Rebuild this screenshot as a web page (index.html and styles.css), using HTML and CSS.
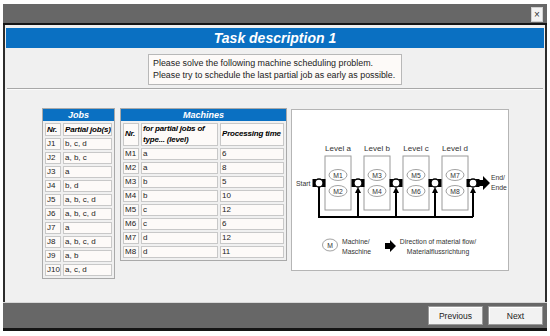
FILE: index.html
```html
<!DOCTYPE html>
<html lang="en">
<head>
    <meta charset="UTF-8">
    <title>Task description 1</title>
    <link rel="stylesheet" href="styles.css">
</head>
<body>
<div class="window">
    <div class="titlebar"><span class="close">&#215;</span></div>
    <div class="content">
        <div class="banner">Task description 1</div>
        <div class="note">Please solve the following machine scheduling problem.<br>Please try to schedule the last partial job as early as possible.</div>
        <div class="rule"></div>
        <div class="panels">
            <div class="grid jobs">
                <div class="grid-head">Jobs</div>
                <table>
                    <tr class="cols"><th class="nr">Nr.</th><th>Partial job(s)</th></tr>
                    <tr><td>J1</td><td>b, c, d</td></tr>
                    <tr><td>J2</td><td>a, b, c</td></tr>
                    <tr><td>J3</td><td>a</td></tr>
                    <tr><td>J4</td><td>b, d</td></tr>
                    <tr><td>J5</td><td>a, b, c, d</td></tr>
                    <tr><td>J6</td><td>a, b, c, d</td></tr>
                    <tr><td>J7</td><td>a</td></tr>
                    <tr><td>J8</td><td>a, b, c, d</td></tr>
                    <tr><td>J9</td><td>a, b</td></tr>
                    <tr><td>J10</td><td>a, c, d</td></tr>
                </table>
            </div>
            <div class="grid machines">
                <div class="grid-head">Machines</div>
                <table>
                    <tr class="cols tall"><th class="nr">Nr.</th><th class="type">for partial jobs of type... (level)</th><th class="time">Processing time</th></tr>
                    <tr><td>M1</td><td>a</td><td>6</td></tr>
                    <tr><td>M2</td><td>a</td><td>8</td></tr>
                    <tr><td>M3</td><td>b</td><td>5</td></tr>
                    <tr><td>M4</td><td>b</td><td>10</td></tr>
                    <tr><td>M5</td><td>c</td><td>12</td></tr>
                    <tr><td>M6</td><td>c</td><td>6</td></tr>
                    <tr><td>M7</td><td>d</td><td>12</td></tr>
                    <tr><td>M8</td><td>d</td><td>11</td></tr>
                </table>
            </div>
            <div class="diagram">
                <svg width="216" height="160" viewBox="0 0 216 160">
                    <!-- levels -->
                    <g class="level">
                        <rect x="33" y="46" width="26" height="54"/>
                        <rect x="72" y="46" width="26" height="54"/>
                        <rect x="111" y="46" width="26" height="54"/>
                        <rect x="150" y="46" width="26" height="54"/>
                    </g>
                    <g class="label" text-anchor="middle">
                        <text x="46" y="41">Level a</text>
                        <text x="85" y="41">Level b</text>
                        <text x="124" y="41">Level c</text>
                        <text x="163" y="41">Level d</text>
                    </g>
                    <g class="machine">
                        <ellipse cx="46" cy="65" rx="9" ry="5.5"/>
                        <ellipse cx="46" cy="81" rx="9" ry="5.5"/>
                        <ellipse cx="85" cy="65" rx="9" ry="5.5"/>
                        <ellipse cx="85" cy="81" rx="9" ry="5.5"/>
                        <ellipse cx="124" cy="65" rx="9" ry="5.5"/>
                        <ellipse cx="124" cy="81" rx="9" ry="5.5"/>
                        <ellipse cx="163" cy="65" rx="9" ry="5.5"/>
                        <ellipse cx="163" cy="81" rx="9" ry="5.5"/>
                    </g>
                    <g class="small" text-anchor="middle">
                        <text x="46" y="67.5">M1</text>
                        <text x="46" y="83.5">M2</text>
                        <text x="85" y="67.5">M3</text>
                        <text x="85" y="83.5">M4</text>
                        <text x="124" y="67.5">M5</text>
                        <text x="124" y="83.5">M6</text>
                        <text x="163" y="67.5">M7</text>
                        <text x="163" y="83.5">M8</text>
                    </g>
                    <!-- return loop -->
                    <g class="flow">
                        <polyline points="27,77 27,107 181,107"/>
                        <line x1="66" y1="107" x2="66" y2="82"/>
                        <line x1="104" y1="107" x2="104" y2="82"/>
                        <line x1="143" y1="107" x2="143" y2="82"/>
                        <line x1="181" y1="107" x2="181" y2="82"/>
                    </g>
                    <g class="head">
                        <polygon points="63,83 69,83 66,77"/>
                        <polygon points="101,83 107,83 104,77"/>
                        <polygon points="140,83 146,83 143,77"/>
                        <polygon points="178,83 184,83 181,77"/>
                    </g>
                    <!-- buffers -->
                    <g class="buffer">
                        <rect x="20.5" y="69" width="13" height="8"/>
                        <rect x="59.5" y="69" width="13" height="8"/>
                        <rect x="97.5" y="69" width="13" height="8"/>
                        <rect x="136.5" y="69" width="13" height="8"/>
                        <rect x="174.5" y="69" width="13" height="8"/>
                    </g>
                    <g class="buffer-hole">
                        <circle cx="27" cy="73" r="4"/>
                        <circle cx="66" cy="73" r="4"/>
                        <circle cx="104" cy="73" r="4"/>
                        <circle cx="143" cy="73" r="4"/>
                        <circle cx="181" cy="73" r="4"/>
                    </g>
                    <polygon class="head" points="187,70 191,70 191,66 198,73 191,80 191,76 187,76"/>
                    <g class="small">
                        <text x="4" y="75.5">Start</text>
                        <text x="199" y="70">End/</text>
                        <text x="199" y="80">Ende</text>
                    </g>
                    <!-- legend -->
                    <ellipse class="machine" cx="38" cy="135" rx="7.5" ry="6"/>
                    <text class="small" x="38" y="137.5" text-anchor="middle">M</text>
                    <g class="small">
                        <text x="50" y="134">Machine/</text>
                        <text x="50" y="144">Maschine</text>
                    </g>
                    <polygon class="head" points="93,133 98,133 98,130 104,136 98,142 98,139 93,139"/>
                    <g class="small" text-anchor="middle">
                        <text x="146" y="134">Direction of material flow/</text>
                        <text x="146" y="144">Materialflussrichtung</text>
                    </g>
                </svg>
            </div>
        </div>
    </div>
    <div class="footer">
        <button type="button">Previous</button>
        <button type="button">Next</button>
    </div>
</div>
</body>
</html>
```
FILE: styles.css
```css
* {
    padding: 0;
    margin: 0;
    box-sizing: border-box;
}
body {
    font-family: "Liberation Sans", Arial, sans-serif;
    background-color: white;
}
.window {
    width: 544px;
    margin: 4px 0 0 3px;
}
.titlebar {
    height: 21px;
    background-color: #676767;
    border-bottom: 2px solid #151515;
    display: flex;
    justify-content: flex-end;
    align-items: flex-start;
    padding: 3px 4px 0 0;
}
.close {
    width: 12px;
    height: 15px;
    background-color: #f3f3f3;
    border: 1px solid #d0d0d0;
    color: #333;
    font-size: 10px;
    line-height: 13px;
    text-align: center;
}
.content {
    height: 277px;
    background-color: #f0f0f0;
    border-left: 2px solid #2c2c2c;
    border-right: 2px solid #2c2c2c;
    padding: 3px 1px 0;
}
.banner {
    height: 20px;
    background-color: #0a70c2;
    color: white;
    font-size: 14px;
    font-weight: bold;
    font-style: italic;
    text-align: center;
    line-height: 20px;
}
.note {
    width: 254px;
    height: 31px;
    margin: 6px auto 0;
    padding: 3px 4px 0;
    background-color: #fdfaf8;
    border: 1px solid #b8b8b8;
    color: #222;
    font-size: 8.9px;
    line-height: 11.5px;
    white-space: nowrap;
}
.rule {
    height: 2px;
    margin: 3px 1px 0;
    border-top: 1px solid #a8a8a8;
    border-bottom: 1px solid #fbfbfb;
}
.panels {
    display: flex;
    align-items: flex-start;
    margin-top: 18px;
    padding-left: 36px;
}
.grid {
    border: 1px solid #a9a9a9;
    background-color: #f0f0f0;
}
.jobs {
    width: 73px;
}
.machines {
    width: 167px;
    margin-left: 5px;
}
.grid-head {
    height: 12px;
    background-color: #0a70c2;
    color: white;
    font-size: 9px;
    font-weight: bold;
    font-style: italic;
    text-align: center;
    line-height: 12px;
}
.grid table {
    width: 100%;
    table-layout: fixed;
    border-collapse: separate;
    border-spacing: 2px;
}
.grid td,
.grid th {
    background-color: #fdfaf8;
    border: 1px solid #c8c8c8;
    padding: 0 0 0 1px;
    text-align: left;
    color: #222;
    font-size: 8px;
    line-height: 10px;
    white-space: nowrap;
    overflow: hidden;
}
.grid th {
    color: black;
    font-size: 8px;
    font-weight: bold;
    font-style: italic;
    letter-spacing: -0.2px;
    line-height: 11px;
}
.tall th {
    line-height: 10.5px;
}
.tall .type {
    white-space: normal;
}
.grid .nr {
    width: 16px;
}
.machines .type {
    width: 77px;
}
.diagram {
    width: 218px;
    height: 162px;
    margin-left: 4px;
    margin-top: 1px;
    background-color: white;
    border: 1px solid #b5b5b5;
}
.diagram svg {
    display: block;
}
.level rect {
    fill: white;
    stroke: #9a9a9a;
    stroke-width: 1;
}
.label {
    font-size: 8px;
    fill: #333;
}
.machine,
.machine ellipse {
    fill: white;
    stroke: #8a8a8a;
    stroke-width: 0.8;
}
.small {
    font-size: 6.8px;
    fill: #333;
}
.flow polyline,
.flow line {
    fill: none;
    stroke: black;
    stroke-width: 2;
}
.head,
.head polygon {
    fill: black;
}
.buffer rect {
    fill: black;
}
.buffer-hole circle {
    fill: white;
    stroke: black;
    stroke-width: 1.3;
}
.footer {
    height: 29px;
    background-color: #676767;
    border-top: 1px solid #d8d8d8;
    border-bottom: 3px solid #151515;
    display: flex;
    justify-content: flex-end;
    align-items: flex-start;
    gap: 5px;
    padding: 3px 4px 0 0;
}
.footer button {
    width: 55px;
    height: 19px;
    background-color: #f2f2f2;
    border: 1px solid #9a9a9a;
    box-shadow: inset 1px 1px 0 white;
    font-family: "Liberation Sans", Arial, sans-serif;
    font-size: 8.5px;
    color: #222;
}
```
